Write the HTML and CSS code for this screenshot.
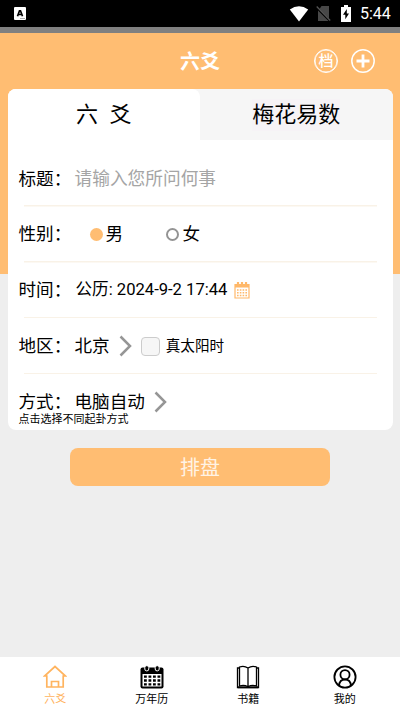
FILE: index.html
```html
<!DOCTYPE html>
<html lang="zh-CN">
<head>
<meta charset="utf-8">
<title>六爻</title>
<link rel="stylesheet" href="styles.css">
</head>
<body>
<div class="status">
  <svg class="app-badge" width="12" height="13" viewBox="0 0 12 13"><rect width="12" height="13" rx="1" fill="#fff"/><path d="M3.500 9.300 5.500 3.800h1L8.500 9.300M4.300 7.500h3.400" fill="none" stroke="#000" stroke-width="1.700"/><path d="M6 11.500h5" stroke="#999" stroke-width=".8"/></svg>
  <svg class="wifi" width="20" height="16" viewBox="0 0 20 16"><path d="M.8 3.400Q10-2.700 19.200 3.400L10 15.500Z" fill="#fff"/></svg>
  <svg class="sim" width="15" height="17" viewBox="0 0 15 17"><path d="M5.500 1H13v12.500L3.500 4ZM2 5.500 12.500 16H2Z" fill="#484848"/><path d="m.7 1.500 13.500 14" stroke="#555" stroke-width="1.300"/></svg>
  <svg class="battery" width="10" height="17" viewBox="0 0 10 17"><path d="M3 0h4v2h3v15H0V2h3Z" fill="#fff"/><path d="M5.800 4 2 9.700h2.300v4.500L8 8.500H5.800Z" fill="#000"/></svg>
  <span class="clock">5:44</span>
</div>
<header class="hero">
  <h1>六爻</h1>
  <div class="actions">
    <span class="archive">档</span>
    <svg width="24" height="24" viewBox="0 0 24 24" fill="none" stroke="#fff"><circle cx="12" cy="12" r="11.200" stroke-width="1.500"/><path d="M5.500 12h13M12 5.500v13" stroke-width="2.800"/></svg>
  </div>
</header>
<main class="card">
  <div class="tabs"><div class="tab active">六 爻</div><div class="tab"><span>梅花易数</span></div></div>
  <div class="row"><span class="label">标题：</span><span class="placeholder">请输入您所问何事</span></div>
  <div class="row gender"><span class="label">性别：</span><span class="radio on"></span><span class="male">男</span><span class="radio"></span><span>女</span></div>
  <div class="row"><span class="label">时间：</span><span class="date">公历: 2024-9-2 17:44</span>
    <svg class="calendar" width="16" height="18" viewBox="0 0 16 18"><path d="M1 3.500h14V17H1Z" fill="none" stroke="#ffb869" stroke-width="1.200"/><path d="M1 3h14v3.500H1Z" fill="#ffb869"/><path d="M4 1v3M8 1v3M12 1v3" stroke="#ffb869" stroke-width="2.200"/><path d="M3 9h10M3 11.700h10M3 14.400h10" stroke="#ffb869" stroke-width="1.500" stroke-dasharray="1.600 1.200"/></svg>
  </div>
  <div class="row"><span class="label">地区：</span><span>北京</span><svg class="chevron" width="13" height="22" viewBox="0 0 13 22"><path d="m1.500 1.500 9.500 9.500-9.500 9.500"/></svg><span class="check"></span><span class="solar">真太阳时</span></div>
  <div class="row last"><span class="label">方式：</span><span>电脑自动</span><svg class="chevron" width="13" height="22" viewBox="0 0 13 22"><path d="m1.500 1.500 9.500 9.500-9.500 9.500"/></svg></div>
  <p class="hint">点击选择不同起卦方式</p>
</main>
<button class="submit">排盘</button>
<nav class="bottom">
  <div class="item current"><svg width="24" height="24" viewBox="0 0 24 24" fill="none" stroke="currentColor" stroke-width="1.700"><path d="M3.800 11H1.500L12 1.500 22.500 11h-2.300v11H3.800Z"/><path d="M8.500 22v-5.500h7V22"/></svg><span>六爻</span></div>
  <div class="item"><svg width="24" height="24" viewBox="0 0 24 24"><path d="M2.500 2.500h19Q23.500 2.500 23.500 4.500v17Q23.500 23.500 21.500 23.500h-19Q.5 23.500.5 21.500v-17Q.5 2.500 2.500 2.500Z" fill="#000"/><path d="M2.500 9h19v12.500h-19Z" fill="#fff"/><g stroke="#fff" fill="#000"><rect x="4.800" y=".7" width="4" height="5.200" rx="1.900"/><rect x="15.200" y=".7" width="4" height="5.200" rx="1.900"/></g><path d="M4 11.700h17M4 15.500h17M4 19.300h17" stroke="#000" stroke-width="2.300" stroke-dasharray="2.800 1.700"/></svg><span>万年历</span></div>
  <div class="item"><svg width="24" height="24" viewBox="0 0 24 24" fill="none" stroke="#000" stroke-width="1.300"><path d="M12 3Q8 .2 3.500 2v19Q8 19.500 12 21.700Q16 19.500 20.500 21V2Q16 .2 12 3v18.700"/><path d="M3.500 3H1.500v19.500h21V3h-2"/><path d="M2 22.300h20" stroke-width="1.800"/></svg><span>书籍</span></div>
  <div class="item"><svg width="24" height="24" viewBox="0 0 24 24" fill="none" stroke="#000" stroke-width="1.800"><circle cx="12" cy="12" r="10.600"/><circle cx="12" cy="9.700" r="4.600"/><path d="M6 20.800q.5-6.300 6-6.300t6 6.300"/></svg><span>我的</span></div>
</nav>
</body>
</html>
```
FILE: styles.css
```css
* { box-sizing: border-box; }
body {
  margin: 0;
  height: 712px;
  display: flex;
  flex-direction: column;
  background: #eee;
  color: #000;
  font: 17.6px/24px Roboto, "Noto Sans CJK SC", sans-serif;
  overflow: hidden;
}
svg { display: block; flex: none; }
.status {
  height: 33px;
  flex: none;
  display: flex;
  align-items: center;
  padding: 0 9px 0 14px;
  background: #000;
  border-bottom: 6px solid #808080;
  color: #fff;
}
.wifi { margin-left: auto; }
.sim { margin-left: 7px; }
.battery { margin-left: 10px; }
.clock { width: 31px; margin-left: 9px; padding-top: 1px; font-size: 16px; white-space: nowrap; }
.hero {
  height: 241px;
  flex: none;
  display: grid;
  grid-template-columns: 1fr auto 1fr;
  align-items: start;
  padding: 16px 25px 0;
  background: #ffbd72;
  color: #fff;
}
.hero h1 { grid-column: 2; margin: 1px 0 0; font-size: 20px; line-height: 24px; font-weight: 700; }
.actions { display: flex; justify-content: flex-end; gap: 13px; }
.archive {
  width: 24px;
  height: 24px;
  border: 1.500px solid #fff;
  box-shadow: inset 0 0 0 .5px #fff;
  border-radius: 50%;
  font-size: 15px;
  font-weight: 500;
  line-height: 23px;
  text-align: center;
}
.card {
  height: 341px;
  flex: none;
  margin: -185px 7.500px 0;
  border-radius: 8px;
  background: #fff;
  overflow: hidden;
}
.tabs { height: 62px; display: grid; grid-template-columns: 1fr 1fr; background: linear-gradient(#f6f6f6 51px, #fff 51px); }
.tab { height: 51px; font-size: 22px; line-height: 52px; text-align: center; }
.tab.active { height: 52px; background: #fff; border-top-right-radius: 8px; word-spacing: 6px; }
.tab span { display: inline-block; height: 32px; line-height: 32px; background: #f6f3f6; }
.row {
  height: 55.800px;
  display: flex;
  align-items: center;
  padding: 0 11px;
  background: linear-gradient(#f9f2e7, #f9f2e7) 16px 100% / 353px 1.500px no-repeat;
}
.row.gender { padding-bottom: 1px; }
.row.last { background: none; }
.label { width: 56px; flex: none; white-space: nowrap; }
.placeholder { color: #a5a5a5; font-size: 17.700px; }
.radio { width: 13px; height: 13px; border: 2px solid #949494; border-radius: 50%; margin: 0 4px 0 0; }
.radio.on { border: 0; background: #ffbd72; margin: 0 3px 0 15px; }
.male { margin-right: 42.500px; }
.date { font-size: 16.600px; margin-left: 1px; }
.calendar { margin-left: 7px; }
.chevron { margin-left: 9px; fill: none; stroke: #969696; stroke-width: 2.500; }
.check { width: 19px; height: 19px; margin: 0 6px 0 9px; border: 1px solid #ccc; border-radius: 4px; background: #f6f6f6; }
.solar { font-size: 14.600px; }
.hint { margin: -18px 0 0 11px; font-size: 11px; line-height: 16px; }
.submit {
  width: 260px;
  height: 38px;
  flex: none;
  align-self: center;
  margin-top: 18px;
  padding: 1px 0 0;
  border: 0;
  border-radius: 8px;
  background: #ffbd72;
  color: #fff3e5;
  font: 20px/38px Roboto, "Noto Sans CJK SC", sans-serif;
}
.bottom { height: 55px; flex: none; margin-top: auto; padding: 8px 7px 0; display: grid; grid-template-columns: repeat(4, 1fr); background: #fff; }
.item { display: flex; flex-direction: column; align-items: center; font-size: 11px; line-height: 16px; }
.item span { margin-top: 3px; }
.current { color: #ffb45f; }
```
